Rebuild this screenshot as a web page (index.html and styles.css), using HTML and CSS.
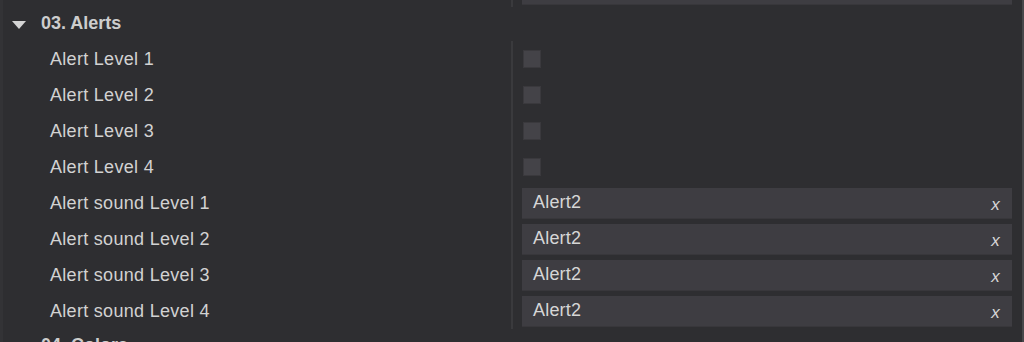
FILE: index.html
```html
<!DOCTYPE html>
<html>
<head>
<meta charset="utf-8">
<link rel="stylesheet" href="styles.css">
</head>
<body>
<div class="panel">
  <div class="row prev">
    <div class="label"></div>
    <div class="sep"></div>
    <div class="value"><div class="input"></div></div>
  </div>
  <div class="header"><span class="tri"></span><span class="htext">03. Alerts</span></div>
  <div class="row"><div class="label">Alert Level 1</div><div class="sep"></div><div class="value"><div class="check"></div></div></div>
  <div class="row"><div class="label">Alert Level 2</div><div class="sep"></div><div class="value"><div class="check"></div></div></div>
  <div class="row"><div class="label">Alert Level 3</div><div class="sep"></div><div class="value"><div class="check"></div></div></div>
  <div class="row"><div class="label">Alert Level 4</div><div class="sep"></div><div class="value"><div class="check"></div></div></div>
  <div class="row"><div class="label">Alert sound Level 1</div><div class="sep"></div><div class="value"><div class="input"><span>Alert2</span><span class="x">x</span></div></div></div>
  <div class="row"><div class="label">Alert sound Level 2</div><div class="sep"></div><div class="value"><div class="input"><span>Alert2</span><span class="x">x</span></div></div></div>
  <div class="row"><div class="label">Alert sound Level 3</div><div class="sep"></div><div class="value"><div class="input"><span>Alert2</span><span class="x">x</span></div></div></div>
  <div class="row"><div class="label">Alert sound Level 4</div><div class="sep"></div><div class="value"><div class="input"><span>Alert2</span><span class="x">x</span></div></div></div>
  <div class="header"><span class="tri"></span><span class="htext">04. Colors</span></div>
</div>
</body>
</html>
```
FILE: styles.css
```css
html, body {
  margin: 0;
  padding: 0;
  background: #2e2e31;
  overflow: hidden;
}
body {
  font-family: "Liberation Sans", Arial, sans-serif;
  font-size: 18px;
  color: #d2d2d2;
}
.panel {
  width: 1024px;
  height: 342px;
  box-sizing: border-box;
  border-left: 3px solid #333336;
  border-right: 2px solid #47474a;
  overflow: hidden;
}
.row {
  display: grid;
  grid-template-columns: 508px 2px 1fr;
  height: 36px;
}
.row.prev {
  margin-top: -29px;
}
.label {
  display: flex;
  align-items: center;
  padding-left: 47px;
  white-space: nowrap;
  letter-spacing: 0.3px;
}
.sep {
  background: #3a3a3d;
}
.value {
  display: flex;
  align-items: center;
  padding: 0 10px 0 9px;
}
.input {
  flex: 1;
  height: 31px;
  box-sizing: border-box;
  background: #3e3d42;
  border-bottom: 1px solid #38373b;
  display: flex;
  align-items: center;
  justify-content: space-between;
  padding: 0 11px 0 11px;
  color: #d6d6d6;
  letter-spacing: 0.2px;
}
.x {
  font-style: italic;
  font-size: 17px;
  margin-top: 4px;
  margin-right: 1px;
}
.check {
  width: 18px;
  height: 18px;
  box-sizing: border-box;
  background: #444348;
  border: 1px solid #3a393d;
  margin-left: 1px;
}
.header {
  height: 34px;
  display: flex;
  align-items: center;
  padding-left: 9px;
  font-weight: bold;
  color: #cdcdcd;
}
.tri {
  width: 0;
  height: 0;
  border-left: 7px solid transparent;
  border-right: 7px solid transparent;
  border-top: 8px solid #d4d4d4;
  margin-right: 15px;
  margin-top: 2px;
}
.htext {
  margin-top: -2px;
}
```
